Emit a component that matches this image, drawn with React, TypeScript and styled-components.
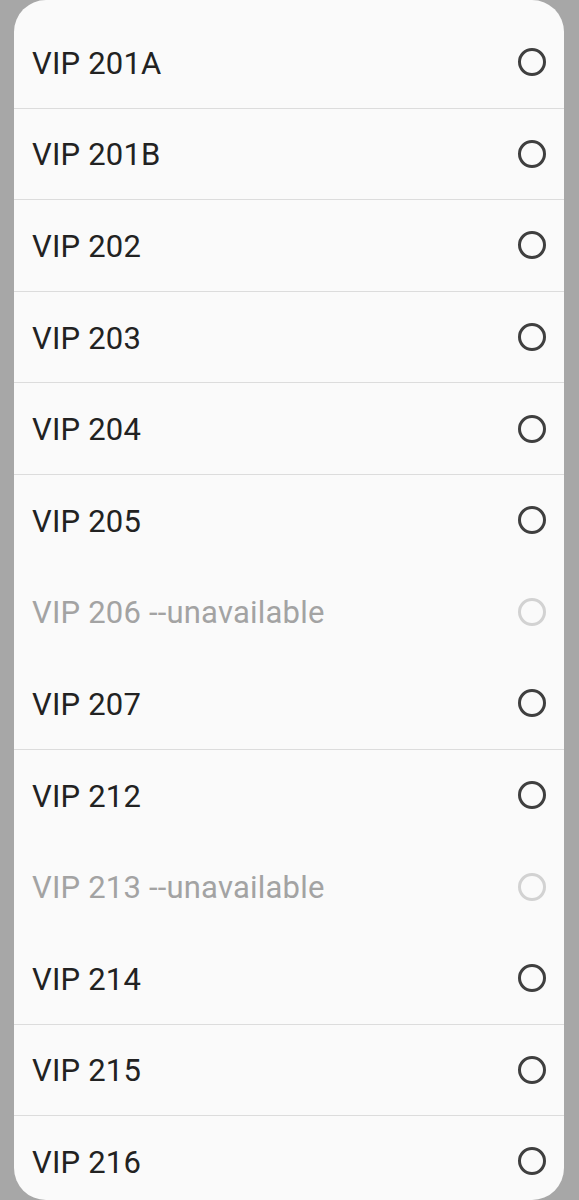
import React from 'react'
import styled, { createGlobalStyle } from 'styled-components'

const GlobalStyle = createGlobalStyle`
  html, body {
    margin: 0;
    padding: 0;
    background: #a7a7a7;
  }
`

const Screen = styled.div`
  width: 579px;
  height: 1200px;
  padding: 0 15px 0 14px;
  box-sizing: border-box;
  overflow: hidden;
`

const Sheet = styled.div`
  height: 1200px;
  background: #fafafa;
  border-radius: 32px;
  padding-top: 17px;
  box-sizing: border-box;
  overflow: hidden;
`

const Row = styled.div<{ $divider: boolean }>`
  display: flex;
  align-items: center;
  justify-content: space-between;
  height: 91.6px;
  box-sizing: border-box;
  padding: 0 18px 0 18px;
  border-bottom: 1px solid ${({ $divider }) => ($divider ? '#dcdcdc' : 'transparent')};
`

const Label = styled.span<{ $disabled: boolean }>`
  font-family: Roboto, 'Noto Sans', sans-serif;
  font-size: 31px;
  color: ${({ $disabled }) => ($disabled ? '#a3a3a3' : '#222222')};
  letter-spacing: 0.2px;
  padding-top: 2px;
`

const Radio = styled.span<{ $disabled: boolean }>`
  width: 28px;
  height: 28px;
  box-sizing: border-box;
  border-radius: 50%;
  border: 3px solid ${({ $disabled }) => ($disabled ? '#d2d2d2' : '#3f3f3f')};
`

const ROOMS = [
  { name: 'VIP 201A' },
  { name: 'VIP 201B' },
  { name: 'VIP 202' },
  { name: 'VIP 203' },
  { name: 'VIP 204' },
  { name: 'VIP 205' },
  { name: 'VIP 206 --unavailable', disabled: true },
  { name: 'VIP 207' },
  { name: 'VIP 212' },
  { name: 'VIP 213 --unavailable', disabled: true },
  { name: 'VIP 214' },
  { name: 'VIP 215' },
  { name: 'VIP 216' }
]

const App = () => {
  return (
    <>
      <GlobalStyle />
      <Screen>
        <Sheet>
          {ROOMS.map((room, i) => {
            const next = ROOMS[i + 1]
            const divider = !room.disabled && !!next && !next.disabled
            return (
              <Row key={room.name} $divider={divider}>
                <Label $disabled={!!room.disabled}>{room.name}</Label>
                <Radio $disabled={!!room.disabled} />
              </Row>
            )
          })}
        </Sheet>
      </Screen>
    </>
  )
}

export default App
